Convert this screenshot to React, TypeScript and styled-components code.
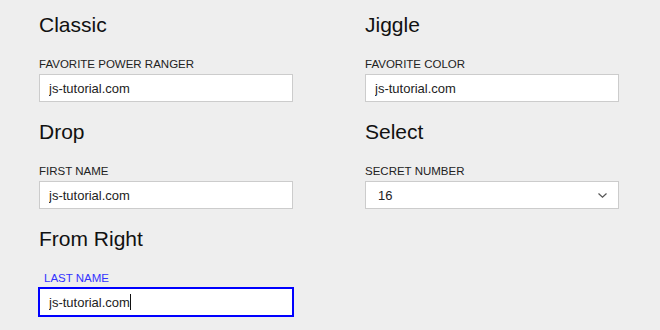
import React, { useEffect, useRef, useState } from 'react'
import styled, { createGlobalStyle, css } from 'styled-components'

const GlobalStyle = createGlobalStyle`
  html, body {
    margin: 0;
    padding: 0;
    background: #eeeeee;
  }
  body {
    font-family: 'Liberation Sans', Arial, sans-serif;
    color: #222;
  }
`

const FONT = "13px 'Liberation Sans', Arial, sans-serif"

const Page = styled.div`
  width: 660px;
  height: 330px;
  box-sizing: border-box;
  padding: 13px 0 0 39px;
  display: grid;
  grid-template-columns: 254px 254px;
  column-gap: 72px;
  row-gap: 18px;
  align-content: start;
  overflow: hidden;
`

const Group = styled.div`
  display: flex;
  flex-direction: column;
`

const Heading = styled.h2`
  margin: 0 0 21px;
  font-size: 21px;
  line-height: 24px;
  font-weight: normal;
  color: #111;
`

const Label = styled.label<{ $active?: boolean }>`
  display: block;
  margin-bottom: 3px;
  font-size: 11.5px;
  line-height: 13px;
  text-transform: uppercase;
  color: #222;
  ${(p) =>
    p.$active &&
    css`
      color: #3333ff;
      transform: translateX(5px);
    `}
`

const fieldBase = css`
  box-sizing: border-box;
  width: 254px;
  height: 28px;
  margin: 0;
  border: 1px solid #cccccc;
  background: #fff;
  font: ${FONT};
  color: #222;
  outline: none;
`

const FieldWrap = styled.div`
  position: relative;
  width: 254px;
`

const Input = styled.input<{ $active?: boolean }>`
  ${fieldBase}
  display: block;
  padding: 0 9px;
  caret-color: transparent;
  ${(p) =>
    p.$active &&
    css`
      outline: 2px solid #0000ff;
      outline-offset: -1px;
    `}
`

const Caret = styled.span`
  position: absolute;
  top: 6px;
  width: 1px;
  height: 16px;
  background: #111;
  pointer-events: none;
`

const Select = styled.select`
  ${fieldBase}
  display: block;
  appearance: none;
  -webkit-appearance: none;
  padding: 0 12px;
  border-radius: 0;
`

const Chevron = styled.svg`
  position: absolute;
  right: 12px;
  top: 12px;
  pointer-events: none;
`

interface FieldProps {
  title: string
  label: string
  active?: boolean
}

const VALUE = 'js-tutorial.com'

function TextField({ title, label, active }: FieldProps) {
  const [caretX, setCaretX] = useState<number | null>(null)
  const ref = useRef<HTMLInputElement>(null)

  useEffect(() => {
    if (!active) return
    const ctx = document.createElement('canvas').getContext('2d')
    if (!ctx) return
    ctx.font = FONT
    setCaretX(10 + ctx.measureText(VALUE).width)
  }, [active])

  return (
    <Group>
      <Heading>{title}</Heading>
      <Label $active={active}>{label}</Label>
      <FieldWrap>
        <Input ref={ref} $active={active} defaultValue={VALUE} />
        {active && caretX !== null && <Caret style={{ left: caretX }} />}
      </FieldWrap>
    </Group>
  )
}

export default function App() {
  return (
    <>
      <GlobalStyle />
      <Page>
        <TextField title="Classic" label="Favorite Power Ranger" />
        <TextField title="Jiggle" label="Favorite Color" />
        <TextField title="Drop" label="First Name" />
        <Group>
          <Heading>Select</Heading>
          <Label>Secret Number</Label>
          <FieldWrap>
            <Select defaultValue="16">
              {[4, 8, 15, 16, 23, 42].map((n) => (
                <option key={n} value={n}>
                  {n}
                </option>
              ))}
            </Select>
            <Chevron width="9" height="5" viewBox="0 0 9 5">
              <path d="M0.5 0.5 L4.5 4.2 L8.5 0.5" fill="none" stroke="#555" strokeWidth="1.2" />
            </Chevron>
          </FieldWrap>
        </Group>
        <TextField title="From Right" label="Last Name" active />
      </Page>
    </>
  )
}
